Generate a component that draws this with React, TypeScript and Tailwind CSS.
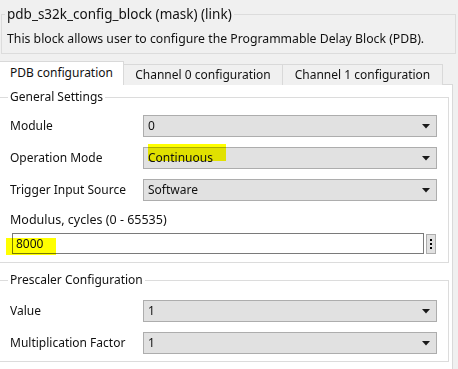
const Arrow = () => (
  <svg width="8" height="5" viewBox="0 0 8 5" className="shrink-0">
    <path d="M0 0H8L4 4.5Z" fill="#1a1a1a" />
  </svg>
);

const Dropdown = ({ value, mark }: { value: string; mark?: boolean }) => (
  <div className="relative flex h-[22px] w-[294px] items-center justify-between border border-[#adadad] bg-[#e1e1e1] pl-[4px] pr-[6px]">
    {mark && (
      <span className="absolute left-[4px] top-[-4px] h-[17px] w-[78px] bg-[#ffff00] mix-blend-multiply" />
    )}
    <span className="relative">{value}</span>
    <Arrow />
  </div>
);

const Row = ({ label, value, mark }: { label: string; value: string; mark?: boolean }) => (
  <div className="flex items-center">
    <span className="w-[135px] pl-[2px]">{label}</span>
    <Dropdown value={value} mark={mark} />
  </div>
);

export default function App() {
  return (
    <div
      className="h-[369px] w-[458px] overflow-hidden bg-[#f0f0f0] text-[12px] leading-[14px] text-[#111]"
      style={{ fontFamily: '"Noto Sans", "Liberation Sans", sans-serif' }}
    >
      {/* mask header */}
      <fieldset className="ml-[1px] mt-[6px] h-[48px] w-[455px] border border-[#dcdcdc] pl-[3px]">
        <legend className="px-[2px] text-[13.5px] leading-[16px]">pdb_s32k_config_block (mask) (link)</legend>
        <p className="mt-[10px] pl-[2px] text-[12.25px]">
          This block allows user to configure the Programmable Delay Block (PDB).
        </p>
      </fieldset>

      {/* tabs */}
      <div className="mt-[7px] flex items-end">
        <div className="relative z-10 flex h-[24px] w-[124px] items-center justify-center border border-b-0 border-l-0 border-[#d9d9d9] bg-white pb-[2px]">
          PDB configuration
        </div>
        <div className="flex h-[21px] w-[159px] items-center justify-center border border-l-0 border-b-0 border-[#d9d9d9] bg-[#f0f0f0]">
          Channel 0 configuration
        </div>
        <div className="flex h-[21px] w-[160px] items-center justify-center border border-l-0 border-b-0 border-[#d9d9d9] bg-[#f0f0f0]">
          Channel 1 configuration
        </div>
      </div>

      {/* tab panel */}
      <div className="-mt-px h-[300px] w-[453px] border border-l-0 border-[#d9d9d9] bg-white pt-[5px]">
        <fieldset className="ml-[-4px] w-[453px] border border-[#dcdcdc] pb-[8px] pl-[11px]">
          <legend className="px-[2px]">General Settings</legend>
          <div className="mt-[11px] flex flex-col gap-[10px]">
            <Row label="Module" value="0" />
            <Row label="Operation Mode" value="Continuous" mark />
            <Row label="Trigger Input Source" value="Software" />
          </div>
          <div className="mt-[11px] pl-[2px] text-[12.5px] leading-[16px]">Modulus, cycles (0 - 65535)</div>
          <div className="mt-[5px] flex items-center">
            <div className="relative ml-[4px] flex h-[21px] w-[412px] items-center border border-[#7a7a7a] bg-white pl-[3px]">
              <span className="absolute left-[-7px] top-[4px] h-[17px] w-[50px] bg-[#ffff00] mix-blend-multiply" />
              <span className="relative">8000</span>
            </div>
            <div className="ml-[2px] flex h-[20px] w-[10px] flex-col items-center justify-center gap-[2px] border border-[#adadad] bg-[#e1e1e1]">
              <span className="h-[2px] w-[2px] bg-black" />
              <span className="h-[2px] w-[2px] bg-black" />
              <span className="h-[2px] w-[2px] bg-black" />
            </div>
          </div>
        </fieldset>

        <fieldset className="ml-[-4px] mt-[10px] w-[453px] border border-[#dcdcdc] pb-[7px] pl-[11px]">
          <legend className="px-[2px]">Prescaler Configuration</legend>
          <div className="mt-[13px] flex flex-col gap-[10px]">
            <Row label="Value" value="1" />
            <Row label="Multiplication Factor" value="1" />
          </div>
        </fieldset>
      </div>
    </div>
  );
}
